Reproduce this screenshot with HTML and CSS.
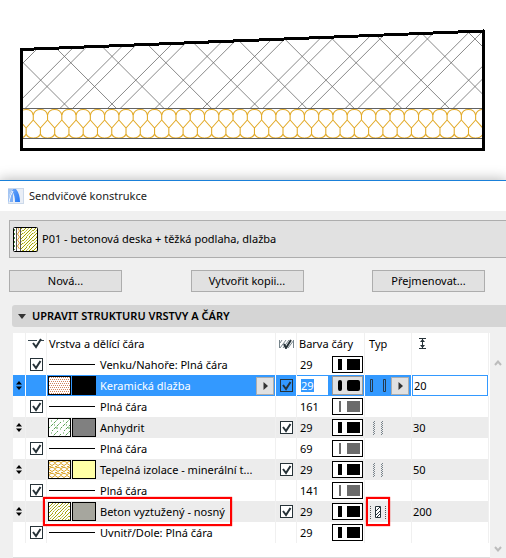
FILE: index.html
```html
<!DOCTYPE html>
<html lang="cs">
<head>
<meta charset="utf-8">
<title>Sendvičové konstrukce</title>
<link rel="stylesheet" href="styles.css">
</head>
<body>
<svg class="defs" width="0" height="0" aria-hidden="true">
  <defs>
    <symbol id="tick" viewBox="0 0 13 13"><path d="M3 6l3 4 4.500-7" fill="none" stroke="#263238" stroke-width="2"/></symbol>
    <symbol id="updown" viewBox="0 0 6 9"><path d="M3 0l3 3.500H0zM3 9l3-3.500H0z" fill="#000"/></symbol>
    <symbol id="play" viewBox="0 0 5 8"><path d="M0.500 0v8L5 4z" fill="#333"/></symbol>
    <symbol id="finish" viewBox="0 0 10 14"><g fill="none" stroke="#78838a" stroke-dasharray="1 1"><path d="M1.500 0v14M9.500 0v14"/><path d="M0.500 1v13M8.500 1v13"/></g></symbol>
    <pattern id="dots" width="2" height="4" patternUnits="userSpaceOnUse"><path d="M0 0h1v1H0zM1 2h1v1H1z" fill="#d0835c"/></pattern>
    <pattern id="green" width="12" height="12" patternUnits="userSpaceOnUse"><path d="M-1 10L10 -1M2 13L13 2" stroke="#55a050" stroke-dasharray="3 1"/><path d="M7 9h2M2 2h1M5 6h1M11 10h1" stroke="#55a050"/></pattern>
    <pattern id="wool" width="6" height="6" patternUnits="userSpaceOnUse"><path d="M0 1.500l2-1h2l2 1M0 1.500v1l3 2 3-2v-1M3 4.500v1M0 5.500h2" fill="none" stroke="#dda72f"/></pattern>
    <pattern id="concrete" width="10" height="10" patternUnits="userSpaceOnUse"><path d="M-1 11L11 -1M-1 1L1 -1M9 11L11 9" stroke="#a0a000" stroke-width="1"/><path d="M-1 8L8 -1M2 11L11 2" stroke="#a0a000" stroke-dasharray="2 1"/><path d="M-1 5L5 -1M5 11L11 5" stroke="#a0a000"/></pattern>
  </defs>
</svg>

<svg class="section-drawing" viewBox="0 0 506 168" role="img" aria-label="Řez konstrukcí">
  <defs>
    <clipPath id="slab"><path d="M23 50L482 31V108H23z"/></clipPath>
    <clipPath id="wool-layer"><path d="M23 108H482V139H23z"/></clipPath>
    <g id="h1"><path d="M-60.500 -21L68.500 108M73.300 0L-34.700 108M86 0L-22 108"/></g>
    <g id="h2"><use href="#h1"/><use href="#h1" x="47.550"/></g>
    <g id="h4"><use href="#h2"/><use href="#h2" x="95.100"/></g>
    <g id="h8"><use href="#h4"/><use href="#h4" x="190.200"/></g>
    <g id="w1"><path d="M0 11V6C1 2 4 .500 7.100 .500S13.300 2 14.270 6M0 11L7.130 19L14.270 11M7.130 19v6C6 28 3 29 0 29M7.130 25C8.300 28 11.300 29 14.270 29"/></g>
    <g id="w2"><use href="#w1"/><use href="#w1" x="14.270"/></g>
    <g id="w4"><use href="#w2"/><use href="#w2" x="28.540"/></g>
    <g id="w8"><use href="#w4"/><use href="#w4" x="57.080"/></g>
    <g id="w16"><use href="#w8"/><use href="#w8" x="114.160"/></g>
  </defs>
  <g clip-path="url(#slab)" fill="none" stroke="#6a6a6a" stroke-width=".8"><use href="#h8"/><use href="#h8" x="380.400"/></g>
  <g clip-path="url(#wool-layer)"><g transform="translate(19 109)" fill="none" stroke="#e2aa28" stroke-width="1.100"><use href="#w16"/><use href="#w16" x="228.320"/><use href="#w1" x="456.640"/></g></g>
  <path d="M23 108.500H482M23 138.500H482" stroke="#626262"/>
  <path d="M21.500 49.500L483.500 31V149.500H21.500z" fill="none" stroke="#000" stroke-width="3" stroke-linejoin="round" shape-rendering="crispEdges"/>
</svg>

<main class="dialog">
  <header class="titlebar">
    <svg class="logo" viewBox="0 0 16 16" aria-hidden="true">
      <defs><linearGradient id="lg" x2="1" y2="1"><stop stop-color="#6aa5f8"/><stop offset="1" stop-color="#2378f4"/></linearGradient></defs>
      <path d="M0 0h16v16H0z" fill="#ccd9ea"/><path d="M1 1h14v14H1z" fill="#e9eef6"/>
      <path d="M0 1h5Q1 5 0 13z" fill="#a4c5f2"/>
      <path d="M0 14Q1 6 5 2V14z" fill="#7fb0f5"/>
      <path d="M5 1h3Q12 6 12 14H7Q7 7 4 3z" fill="url(#lg)"/>
      <path d="M5 3Q2 7 1 14" fill="none" stroke="#fff"/>
    </svg>
    <h1>Sendvičové konstrukce</h1>
  </header>

  <button class="preset" type="button">
    <svg width="25" height="25" viewBox="0 0 25 25" aria-hidden="true">
      <rect x=".5" y=".5" width="24" height="24" rx="1" fill="#fff" stroke="#000"/>
      <path d="M8 1h16v23H8z" fill="#fffff0"/><path d="M8 1h16v23H8z" fill="url(#concrete)"/>
      <path d="M1.500 2v21" stroke="#4b8b45" stroke-dasharray="2 2"/><path d="M3.500 1v23M7.500 1v23" stroke="#555"/>
      <path d="M5 1l1.500 3L4.500 7l2 3-2 3 2 3-2 3 2 3" fill="none" stroke="#dfa030"/>
    </svg>
    <span>P01 - betonová deska + těžká podlaha, dlažba</span>
  </button>

  <div class="actions">
    <button type="button">Nová...</button>
    <button type="button">Vytvořit kopii...</button>
    <button type="button">Přejmenovat...</button>
  </div>

  <h2 class="section-title"><svg width="8" height="5" viewBox="0 0 8 5" aria-hidden="true"><path d="M0 0h8L4 5z" fill="#333"/></svg>UPRAVIT STRUKTURU VRSTVY A ČÁRY</h2>

  <div class="list">
    <div class="panel">
      <table>
        <colgroup><col class="c-grip"><col class="c-check"><col><col class="c-check"><col class="c-pen"><col class="c-type"><col class="c-size"></colgroup>
        <thead>
          <tr>
            <th></th>
            <th><svg width="16" height="11" viewBox="0 0 16 11" aria-label="Zobrazit čáru"><path d="M0 2.500h9M13 2.500h3" stroke="#37474f"/><path d="M5 5l3 4 5-8" fill="none" stroke="#263238" stroke-width="2"/></svg></th>
            <th class="name">Vrstva a dělící čára</th>
            <th><svg width="15" height="10" viewBox="0 0 15 10" aria-label="Zobrazit výplň"><path d="M.500 1v8M14.500 1v8M1 9l6-8M4 9l6-8M9 9l6-8M1 4l2-3" stroke="#77858c"/><path d="M5 5l2 4 5-8" fill="none" stroke="#263238" stroke-width="2"/></svg></th>
            <th class="pen">Barva čáry</th>
            <th class="type">Typ</th>
            <th class="size"><svg width="7" height="11" viewBox="0 0 7 11" aria-label="Tloušťka"><path d="M0 .500h7M0 10.500h7M3.500 1v9" stroke="#263238"/><path d="M3.500 1l2.500 3H1zM3.500 10l2.500-3H1z" fill="#263238"/></svg></th>
          </tr>
        </thead>
        <tbody>
          <tr>
            <td></td>
            <td><label class="check"><input type="checkbox" checked aria-label="Venku/Nahoře"><svg><use href="#tick"/></svg></label></td>
            <td><div class="layer"><i class="line"></i>Venku/Nahoře: Plná čára</div></td>
            <td></td>
            <td><div class="pen"><span>29</span><button class="swatch" type="button" aria-label="Pero 29"><i></i><b></b></button></div></td>
            <td></td><td></td>
          </tr>
          <tr class="selected">
            <td><svg class="grip"><use href="#updown"/></svg></td>
            <td></td>
            <td><div class="layer"><svg class="fill" viewBox="0 0 21 17"><path d="M0 0h21v17H0z" fill="url(#dots)"/></svg><i class="color black"></i><span>Keramická dlažba</span><button class="more" type="button" aria-label="Vybrat materiál"><svg><use href="#play"/></svg></button></div></td>
            <td><label class="check"><input type="checkbox" checked aria-label="Keramická dlažba"><svg><use href="#tick"/></svg></label></td>
            <td><div class="pen"><input type="text" value="29" aria-label="Číslo pera"><button class="swatch" type="button" aria-label="Pero 29"><i></i><b></b></button></div></td>
            <td><div class="kind"><svg width="16" height="14" viewBox="0 0 16 14"><path d="M.500.500h2v12h-2zM13.500.500h2v12h-2z" fill="none" stroke="#263b50"/></svg><button class="more" type="button" aria-label="Vybrat typ"><svg><use href="#play"/></svg></button></div></td>
            <td><input class="thickness" type="text" value="20" aria-label="Tloušťka vrstvy"></td>
          </tr>
          <tr>
            <td></td>
            <td><label class="check"><input type="checkbox" checked aria-label="Dělící čára 161"><svg><use href="#tick"/></svg></label></td>
            <td><div class="layer"><i class="line"></i>Plná čára</div></td>
            <td></td>
            <td><div class="pen"><span>161</span><button class="swatch thin" type="button" aria-label="Pero 161"><i></i><b></b></button></div></td>
            <td></td><td></td>
          </tr>
          <tr class="skin">
            <td><svg class="grip"><use href="#updown"/></svg></td>
            <td></td>
            <td><div class="layer"><svg class="fill" viewBox="0 0 21 17"><path d="M0 0h21v17H0z" fill="url(#green)"/></svg><i class="color gray"></i><span>Anhydrit</span></div></td>
            <td><label class="check"><input type="checkbox" checked aria-label="Anhydrit"><svg><use href="#tick"/></svg></label></td>
            <td><div class="pen"><span>29</span><button class="swatch" type="button" aria-label="Pero 29"><i></i><b></b></button></div></td>
            <td><svg class="finish"><use href="#finish"/></svg></td>
            <td class="size">30</td>
          </tr>
          <tr>
            <td></td>
            <td><label class="check"><input type="checkbox" checked aria-label="Dělící čára 69"><svg><use href="#tick"/></svg></label></td>
            <td><div class="layer"><i class="line"></i>Plná čára</div></td>
            <td></td>
            <td><div class="pen"><span>69</span><button class="swatch thin" type="button" aria-label="Pero 69"><i></i><b></b></button></div></td>
            <td></td><td></td>
          </tr>
          <tr class="skin">
            <td><svg class="grip"><use href="#updown"/></svg></td>
            <td></td>
            <td><div class="layer"><svg class="fill" viewBox="0 0 21 17"><path d="M0 0h21v17H0z" fill="url(#wool)"/></svg><i class="color yellow"></i><span>Tepelná izolace - minerální t...</span></div></td>
            <td><label class="check"><input type="checkbox" checked aria-label="Tepelná izolace"><svg><use href="#tick"/></svg></label></td>
            <td><div class="pen"><span>29</span><button class="swatch" type="button" aria-label="Pero 29"><i></i><b></b></button></div></td>
            <td><svg class="finish"><use href="#finish"/></svg></td>
            <td class="size">50</td>
          </tr>
          <tr>
            <td></td>
            <td><label class="check"><input type="checkbox" checked aria-label="Dělící čára 141"><svg><use href="#tick"/></svg></label></td>
            <td><div class="layer"><i class="line"></i>Plná čára</div></td>
            <td></td>
            <td><div class="pen"><span>141</span><button class="swatch thin" type="button" aria-label="Pero 141"><i></i><b></b></button></div></td>
            <td></td><td></td>
          </tr>
          <tr class="skin">
            <td><svg class="grip"><use href="#updown"/></svg></td>
            <td></td>
            <td class="marked"><div class="layer"><svg class="fill" viewBox="0 0 21 17"><path d="M0 0h21v17H0z" fill="url(#concrete)"/></svg><i class="color concrete"></i><span>Beton vyztužený - nosný</span></div><div class="mark mark-name"></div></td>
            <td><label class="check"><input type="checkbox" checked aria-label="Beton vyztužený"><svg><use href="#tick"/></svg></label></td>
            <td><div class="pen"><span>29</span><button class="swatch" type="button" aria-label="Pero 29"><i></i><b></b></button></div></td>
            <td class="marked"><svg class="core" viewBox="0 0 17 14"><path d="M.500 1v13M15.500 1v13" stroke="#555" stroke-dasharray="1 1"/><path d="M5.500 1.500h5v11h-5z" fill="#fff" stroke="#263238"/><path d="M6 6l4-4M6 10l4-4M7 12l3-3" stroke="#263238"/></svg><div class="mark mark-type"></div></td>
            <td class="size">200</td>
          </tr>
          <tr>
            <td></td>
            <td><label class="check"><input type="checkbox" checked aria-label="Uvnitř/Dole"><svg><use href="#tick"/></svg></label></td>
            <td><div class="layer"><i class="line"></i>Uvnitř/Dole: Plná čára</div></td>
            <td></td>
            <td><div class="pen"><span>29</span><button class="swatch" type="button" aria-label="Pero 29"><i></i><b></b></button></div></td>
            <td></td><td></td>
          </tr>
        </tbody>
      </table>
    </div>
    <div class="scroll" aria-hidden="true">
      <svg width="8" height="6" viewBox="0 0 8 6"><path d="M1 5l3-3.500L7 5" fill="none" stroke="#bcbcbc" stroke-width="2"/></svg>
      <svg width="8" height="6" viewBox="0 0 8 6"><path d="M1 1l3 3.500L7 1" fill="none" stroke="#bcbcbc" stroke-width="2"/></svg>
    </div>
  </div>
</main>
</body>
</html>
```
FILE: styles.css
```css
* { box-sizing: border-box; }

body {
  margin: 0;
  background: #fff;
  color: #000;
  font: 11px/16px "Noto Sans", "Open Sans", sans-serif;
  overflow: hidden;
}

button, input { font: inherit; color: inherit; margin: 0; }
svg { display: block; flex: none; }
.defs { position: absolute; }
.section-drawing { width: 100%; }

.dialog {
  background: #f0f0f0;
  border-top: 1px solid #1a80d9;
  margin-top: 12px;
  box-shadow: 0 0 12px 1px #bbb;
}

.titlebar {
  display: flex;
  align-items: center;
  gap: 5px;
  height: 30px;
  padding-left: 8px;
  background: #fff;
}
.titlebar h1 { margin: 0; font-size: 11px; font-weight: 400; color: #222; }
.logo { width: 16px; height: 16px; }

.preset {
  display: flex;
  align-items: center;
  gap: 4px;
  width: calc(100% - 8px);
  height: 38px;
  margin: 9px 0 0 9px;
  padding: 0 3px;
  background: #e1e1e1;
  border: 1px solid #adadad;
  border-right: 0;
}

.actions {
  display: flex;
  justify-content: space-between;
  margin: 12px 21px 0 9px;
}
.actions button {
  width: 113px;
  height: 22px;
  padding: 0;
  background: #e1e1e1;
  border: 1px solid #adadad;
}

.section-title {
  display: flex;
  align-items: center;
  gap: 6px;
  height: 22px;
  margin: 13px 0 0 12px;
  padding-left: 6px;
  background: #d5d5d5;
  border-radius: 3px 0 0 3px;
  font-size: 11px;
  font-weight: 600;
}

.list { display: flex; margin: 6px 0 0 13px; }
.panel {
  flex: 1;
  padding: 0 1px 14px 0;
  background: #fff;
  border-bottom: 1px solid #ddd;
}
.scroll {
  display: flex;
  flex-direction: column;
  justify-content: space-between;
  width: 16px;
  padding: 27px 0 6px 4px;
}

table { width: 100%; table-layout: fixed; border-collapse: separate; border-spacing: 0; }
.c-grip { width: 13px; }
.c-check { width: 21px; }
.c-pen { width: 68px; }
.c-type { width: 47px; }
.c-size { width: 77px; }

th, td { height: 21px; padding: 0; border-right: 1px solid #f0f0f0; text-align: left; font-weight: 400; }
th svg { margin: 0 auto; }
th.name, th.pen, th.type { padding-left: 2px; }
th.type { padding-left: 4px; }
th.size svg { margin: 0 0 0 7px; }
td.size { padding-left: 1px; }
.skin td { background: #ececec; }
.selected td { background: #3399ff; border-right-color: #fff; }

.grip { width: 6px; height: 9px; margin-left: 3px; }
.check { display: grid; width: 13px; height: 13px; margin-left: 4px; }
.check input, .check svg { grid-area: 1 / 1; width: 13px; height: 13px; }
.check input { appearance: none; background: #fff; border: 1px solid #263238; }
.check svg { z-index: 1; pointer-events: none; }
.selected .check input { background: transparent; }

.layer { display: flex; align-items: center; height: 21px; padding-left: 1px; white-space: nowrap; }
.layer .line { width: 46px; height: 1px; margin: 0 5px 0 1px; background: #000; }
.fill { width: 23px; height: 19px; border: 1px solid #000; background: #fff; }
.color { width: 24px; height: 19px; margin: 0 4px 0 1px; border: 1px solid #000; }
.black { background: #000; }
.gray { background: #808080; }
.yellow { background: #ffffa6; }
.concrete { background: #a6a69e; }
.selected .layer { color: #fff; }

.more {
  display: grid;
  place-items: center;
  width: 18px;
  height: 18px;
  margin-left: auto;
  padding: 0;
  background: #e1e1e1;
  border: 1px solid #adadad;
}
.more svg { width: 5px; height: 8px; }
.selected .layer .more { margin-right: 1px; }

.pen { font-size: 11px; }
div.pen { display: flex; align-items: center; justify-content: space-between; padding: 0 1px 0 3px; }
.pen input {
  width: 31px;
  height: 19px;
  margin-left: -3px;
  padding: 0 0 0 4px;
  border: 0;
  color: #fff;
  background: linear-gradient(#3399ff, #3399ff) 4px 3px / 13px 13px no-repeat #fff;
}
.swatch {
  display: flex;
  align-items: center;
  justify-content: space-between;
  width: 31px;
  height: 17px;
  padding: 0 2px 0 5px;
  background: #fff;
  border: 1px solid #000;
}
.swatch i { width: 4px; height: 11px; background: #000; }
.swatch b { width: 13px; height: 11px; background: #000; }
.thin { padding-left: 6px; }
.thin i { width: 2px; }
.thin i, .thin b { background: #6b6b6b; }
.selected .swatch { height: 19px; background: #e1e1e1; border-color: #999; }
.selected .swatch i, .selected .swatch b { border-radius: 2px; }

.kind { display: flex; align-items: center; padding: 0 2px 0 5px; }
.finish { width: 10px; height: 14px; margin-left: 8px; }
.core { width: 17px; height: 14px; margin-left: 5px; }
.thickness { display: block; width: 100%; height: 21px; padding: 0 1px; border: 1px solid #3399ff; background: #fff; }

.marked { position: relative; }
.mark {
  position: absolute;
  top: -4px;
  height: 29px;
  border: 2px solid #f00;
  box-shadow: 0 0 1px #f00;
  pointer-events: none;
}
.mark-name { left: -4px; width: 189px; }
.mark-type { left: 1px; width: 24px; }
```
